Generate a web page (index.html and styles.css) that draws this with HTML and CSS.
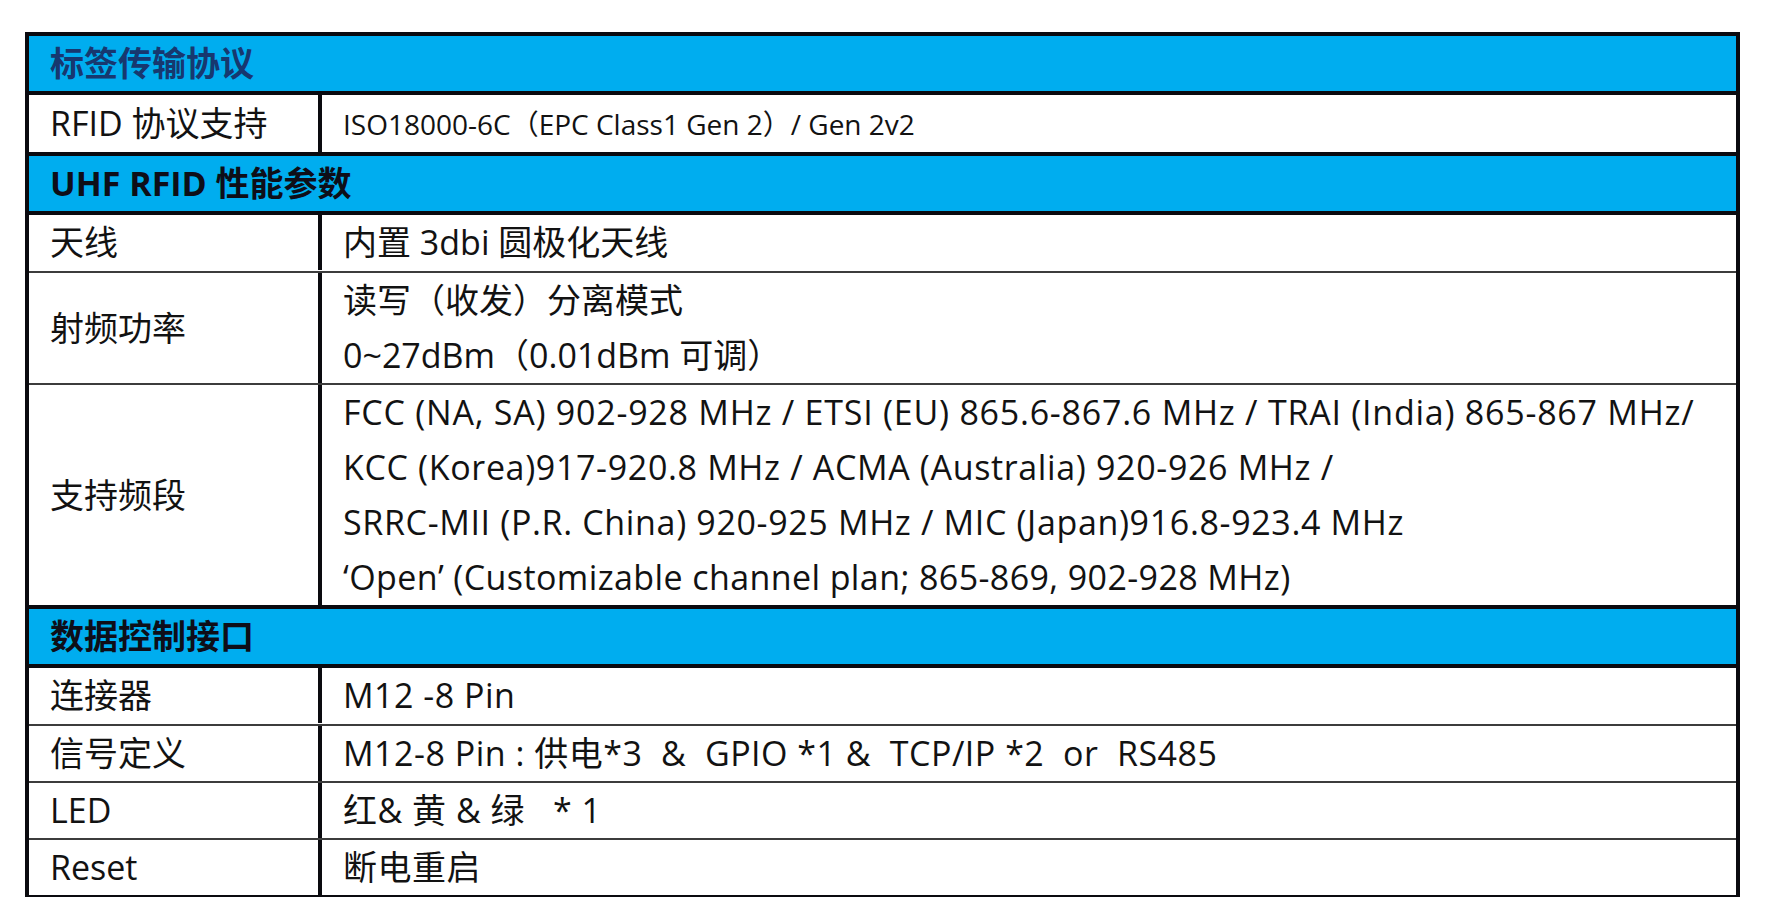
FILE: index.html
```html
<!DOCTYPE html>
<html lang="zh-CN">
<head>
<meta charset="utf-8">
<title>规格参数</title>
<link rel="stylesheet" href="styles.css">
</head>
<body>
<div class="sheet">
  <div class="head head-navy">标签传输协议</div>
  <div class="row row-last">
    <div class="label">RFID 协议支持</div>
    <div class="value"><span class="small">ISO18000-6C（EPC Class1 Gen 2）/ Gen 2v2</span></div>
  </div>

  <div class="head">UHF RFID 性能参数</div>
  <div class="row row-tall">
    <div class="label">天线</div>
    <div class="value">内置 3dbi 圆极化天线</div>
  </div>
  <div class="row">
    <div class="label">射频功率</div>
    <div class="value">
      <div>读写（收发）分离模式</div>
      <div>0~27dBm（0.01dBm 可调）</div>
    </div>
  </div>
  <div class="row row-last">
    <div class="label">支持频段</div>
    <div class="value bands">
      <div class="fcc">FCC (NA, SA) 902-928 MHz / ETSI (EU) 865.6-867.6 MHz / TRAI (India) 865-867 MHz/</div>
      <div>KCC (Korea)917-920.8 MHz / ACMA (Australia) 920-926 MHz /</div>
      <div>SRRC-MII (P.R. China) 920-925 MHz / MIC (Japan)916.8-923.4 MHz</div>
      <div class="open">‘Open’ (Customizable channel plan; 865-869, 902-928 MHz)</div>
    </div>
  </div>

  <div class="head">数据控制接口</div>
  <div class="row row-tall">
    <div class="label">连接器</div>
    <div class="value"><span class="pre">M12 -8 Pin</span></div>
  </div>
  <div class="row">
    <div class="label">信号定义</div>
    <div class="value"><span class="pre">M12-8 Pin : 供电*3  &amp;  GPIO *1 &amp;  TCP/IP *2  or  RS485</span></div>
  </div>
  <div class="row">
    <div class="label">LED</div>
    <div class="value"><span class="pre">红&amp; 黄 &amp; 绿   * 1</span></div>
  </div>
  <div class="row row-end">
    <div class="label">Reset</div>
    <div class="value"><span class="pre">断电重启</span></div>
  </div>
</div>
</body>
</html>
```

FILE: styles.css
```css
html, body {
  margin: 0;
  padding: 0;
  background: #ffffff;
}

body {
  font-family: "Open Sans", "Noto Sans CJK SC", sans-serif;
  color: #121212;
}

.sheet {
  box-sizing: border-box;
  width: 1715px;
  margin: 32px 0 0 25px;
  border: 4px solid #0a0a0f;
}

.head {
  background: #00adef;
  height: 55px;
  line-height: 55px;
  padding-left: 21px;
  font-size: 34px;
  font-weight: 700;
  color: #0e0e18;
  border-bottom: 4px solid #0a0a0f;
}

.head-navy {
  color: #17386f;
}

.row {
  display: flex;
  border-bottom: 2px solid #3c3c3c;
  font-size: 34px;
  line-height: 55px;
}

.row-tall {
  padding-bottom: 1px;
}

.row-last {
  border-bottom: 4px solid #0a0a0f;
}

.row-end {
  border-bottom: none;
}

.label {
  box-sizing: border-box;
  width: 289px;
  flex: none;
  padding-left: 21px;
  display: flex;
  align-items: center;
}

.value {
  flex: 1;
  border-left: 4px solid #0a0a0f;
  padding-left: 21px;
}

.bands {
  letter-spacing: 0.65px;
}

.bands .fcc {
  letter-spacing: 0.76px;
}

.bands .open {
  letter-spacing: 0.4px;
}

.small {
  font-size: 28px;
}

.pre {
  white-space: pre;
  letter-spacing: 0.5px;
}
```
